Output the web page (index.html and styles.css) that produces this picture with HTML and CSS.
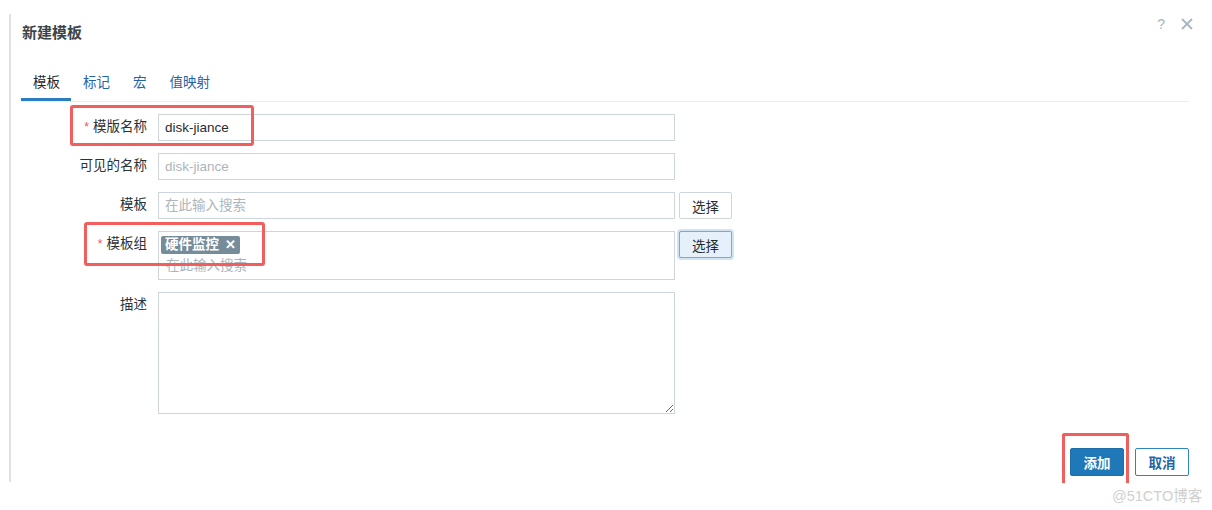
FILE: index.html
```html
<!DOCTYPE html>
<html lang="zh">
<head>
<meta charset="utf-8">
<title>新建模板</title>
<link rel="stylesheet" href="styles.css">
</head>
<body>
<div class="dialog">
  <div class="header">
    <h4 class="title">新建模板</h4>
    <div class="header-icons">
      <span class="help">?</span>
      <svg class="close" width="12" height="12" viewBox="0 0 12 12"><path d="M1 1 L11 11 M11 1 L1 11" stroke="#aab4bb" stroke-width="1.8" fill="none"/></svg>
    </div>
  </div>
  <div class="tabs">
    <span class="tab active">模板</span>
    <span class="tab">标记</span>
    <span class="tab">宏</span>
    <span class="tab">值映射</span>
  </div>
  <div class="form">
    <label class="lbl"><span class="req">*</span>模版名称</label>
    <div class="field"><input class="inp" type="text" value="disk-jiance"></div>
    <div></div>

    <label class="lbl">可见的名称</label>
    <div class="field"><input class="inp" type="text" placeholder="disk-jiance"></div>
    <div></div>

    <label class="lbl">模板</label>
    <div class="field"><div class="inp ph">在此输入搜索</div></div>
    <div><button class="btn-sel">选择</button></div>

    <label class="lbl"><span class="req">*</span>模板组</label>
    <div class="field"><div class="multi"><span class="tag">硬件监控 <span class="x">✕</span></span><div class="ph ph2">在此输入搜索</div></div></div>
    <div><button class="btn-sel focus">选择</button></div>

    <label class="lbl">描述</label>
    <div class="field"><textarea class="ta"></textarea></div>
    <div></div>
  </div>
  <div class="footer">
    <button class="btn primary">添加</button>
    <button class="btn secondary">取消</button>
  </div>
</div>
<div class="mark m1"></div>
<div class="mark m2"></div>
<div class="mark m3"></div>
<div class="watermark">@51CTO博客</div>
</body>
</html>
```
FILE: styles.css
```css
html, body {
  margin: 0;
  padding: 0;
  background: #ffffff;
  width: 1212px;
  height: 510px;
  overflow: hidden;
  font-family: "Liberation Sans", "Noto Sans CJK SC", sans-serif;
  color: #1f2c33;
}
.dialog {
  margin: 14px 0 0 9px;
  width: 1180px;
  height: 468px;
  border-left: 2px solid #dde1e4;
  padding-left: 10px;
  box-sizing: border-box;
  display: flex;
  flex-direction: column;
}
.header {
  display: flex;
  justify-content: space-between;
  align-items: flex-start;
  height: 44px;
}
.title {
  margin: 9px 0 0 1px;
  font-size: 15px;
  font-weight: bold;
  color: #3d4448;
  line-height: 20px;
}
.header-icons {
  display: flex;
  align-items: center;
  gap: 16px;
  margin-top: 3px;
  margin-right: -4px;
}
.help {
  font-size: 14px;
  color: #aab4bb;
  line-height: 14px;
}
.close { display: block; }
.tabs {
  margin-top: 15px;
  display: flex;
  border-bottom: 1px solid #ebeef0;
  height: 28px;
}
.tab {
  font-size: 13.5px;
  color: #1f65a6;
  padding: 0 11px;
  line-height: 20px;
  box-sizing: border-box;
}
.tab.active {
  color: #1f2c33;
  border-bottom: 3px solid #2b7dbf;
  padding: 0 11px 0 12px;
  height: 28px;
}
.tab:nth-child(2) { padding-left: 12px; }
.tab:nth-child(3) { padding-left: 12px; padding-right: 12px; }
.tab:nth-child(4) { padding-left: 11px; }
.form {
  margin-top: 12px;
  display: grid;
  grid-template-columns: 126px 517px auto;
  grid-auto-rows: auto;
  column-gap: 11px;
  row-gap: 12px;
  align-items: start;
}
.lbl {
  font-size: 13.5px;
  color: #2a3237;
  text-align: right;
  line-height: 26px;
  height: 27px;
  white-space: nowrap;
}
.req {
  color: #e45959;
  margin-right: 4px;
  font-size: 12px;
}
.field { display: flex; height: auto; }
.inp {
  box-sizing: border-box;
  width: 517px;
  height: 27px;
  border: 1px solid #cfd6db;
  background: #fff;
  font: 13.5px "Liberation Sans", "Noto Sans CJK SC", sans-serif;
  color: #1f2c33;
  padding: 0 6px;
  outline: none;
  margin: 0;
  line-height: 25px;
  display: block;
}
.inp::placeholder { color: #acb5bb; }
.ph { color: #acb5bb; font-size: 13.5px; }
.multi {
  box-sizing: border-box;
  width: 517px;
  height: 49px;
  border: 1px solid #cfd6db;
  padding: 3px 2px 0 2px;
}
.tag {
  display: inline-block;
  background: #768d99;
  color: #fff;
  font-size: 13.5px;
  font-weight: bold;
  line-height: 18px;
  height: 18px;
  padding: 0 4px;
  border-radius: 2px;
}
.tag .x { font-size: 13px; margin-left: 2px; }
.ph2 { padding-left: 5px; line-height: 20px; margin-top: 2px; }
.btn-sel {
  box-sizing: border-box;
  margin-left: -7px;
  width: 53px;
  height: 27px;
  border: 1px solid #cfd6db;
  background: #fff;
  border-radius: 2px;
  color: #1f2c33;
  font: 13.5px "Liberation Sans", "Noto Sans CJK SC", sans-serif;
  padding: 0;
  display: block;
}
.btn-sel.focus {
  background: #e5f0fa;
  border-color: #7aaad4;
  box-shadow: 0 0 0 2px #d1e4f4;
}
.ta {
  box-sizing: border-box;
  width: 517px;
  height: 122px;
  border: 1px solid #cfd6db;
  margin: 0;
  outline: none;
  resize: both;
  display: block;
}
.footer {
  margin-top: 34px;
  display: flex;
  justify-content: flex-end;
  gap: 11px;
}
.btn {
  box-sizing: border-box;
  width: 54px;
  height: 28px;
  border-radius: 2px;
  font: 13.5px "Liberation Sans", "Noto Sans CJK SC", sans-serif;
  padding: 0;
}
.primary {
  background: #1f78b8;
  border: 1px solid #1f6eaa;
  color: #fff;
  font-weight: bold;
}
.secondary {
  background: #fff;
  border: 1px solid #2f84c4;
  color: #1f65a6;
  font-weight: bold;
}
.mark {
  position: absolute;
  border: 3px solid #f25d5d;
  border-radius: 3px;
  box-sizing: border-box;
}
.m1 { left: 70px; top: 105px; width: 184px; height: 41px; }
.m2 { left: 84px; top: 222px; width: 181px; height: 44px; }
.m3 { left: 1062px; top: 433px; width: 67px; height: 50px; border-bottom: none; border-radius: 3px 3px 0 0; }
.watermark {
  position: absolute;
  left: 1112px;
  top: 484px;
  font-size: 14.5px;
  color: #cfcfcf;
  font-family: "Liberation Sans", "Noto Sans CJK SC", sans-serif;
}
```
